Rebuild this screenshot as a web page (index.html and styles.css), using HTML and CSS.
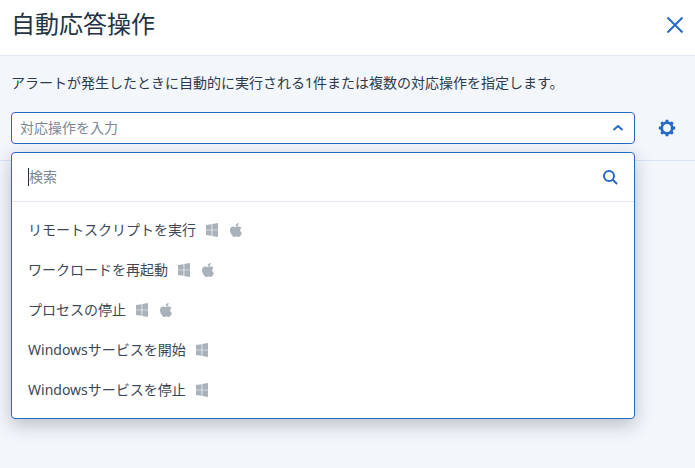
FILE: index.html
```html
<!DOCTYPE html>
<html lang="ja">
<head>
<meta charset="utf-8">
<title>自動応答操作</title>
<link rel="stylesheet" href="styles.css">
</head>
<body>
<svg class="sprites" width="0" height="0">
  <symbol id="win" viewBox="0 0 12 14"><path d="M0 2 5.600 1.200V6.700H0zM6.300 1 12 0v6.700H6.300zM0 7.300h5.600V12.800L0 12zM6.300 7.300H12V14l-5.700-1z"/></symbol>
  <symbol id="apple" viewBox="0 0 14 14"><path d="M9.600 0c.1 1-.3 1.800-.8 2.400-.5.6-1.300 1-2.100.9-.1-.9.3-1.800.8-2.300C8 .4 8.900.1 9.600 0zM12.600 4.700c-.9.600-1.400 1.400-1.400 2.500 0 1.200.7 2.100 1.800 2.600-.3.900-.7 1.700-1.200 2.400-.6.900-1.200 1.700-2.100 1.700-.9 0-1.200-.5-2.300-.5s-1.400.5-2.300.5c-.9 0-1.500-.8-2.100-1.700C1.800 10.700 1 8.900 1 7.300 1 4.900 2.500 3.600 4.100 3.600c.9 0 1.700.6 2.300.6.500 0 1.400-.7 2.500-.7 1.400 0 2.900.6 3.700 1.200z"/></symbol>
</svg>
<header class="header">
  <h1 class="title">自動応答操作</h1>
  <button class="close" aria-label="閉じる">
    <svg width="18" height="18" viewBox="0 0 18 18"><path d="M1.500 1.500 16.500 16.500M16.500 1.500 1.500 16.500"/></svg>
  </button>
</header>
<main class="content">
  <section class="toolbar">
    <p class="desc">アラートが発生したときに自動的に実行される1件または複数の対応操作を指定します。</p>
    <div class="controls">
      <div class="select">
        <span class="placeholder">対応操作を入力</span>
        <svg class="chevron" width="12" height="8" viewBox="0 0 12 8"><path d="M1.500 6 6 2l4.500 4"/></svg>
      </div>
      <button class="gear" aria-label="設定">
        <svg width="18" height="18" viewBox="0 0 18 18"><circle cx="9" cy="9" r="5.300"/><path class="teeth" d="M9 .8v3M9 14.200v3M.8 9h3M14.200 9h3M3.200 3.200l2.100 2.100M12.700 12.700l2.100 2.100M14.800 3.200l-2.100 2.100M5.300 12.700l-2.100 2.100"/></svg>
      </button>
    </div>
  </section>
  <div class="dropdown">
    <div class="search">
      <span class="caret"></span>
      <span class="search-text">検索</span>
      <svg class="search-icon" width="16" height="16" viewBox="0 0 16 16"><circle cx="7" cy="7" r="5"/><path d="M10.800 10.800 15 15"/></svg>
    </div>
    <ul class="list">
      <li class="item"><span class="label">リモートスクリプトを実行</span><svg class="os"><use href="#win"/></svg><svg class="os apple"><use href="#apple"/></svg></li>
      <li class="item"><span class="label">ワークロードを再起動</span><svg class="os"><use href="#win"/></svg><svg class="os apple"><use href="#apple"/></svg></li>
      <li class="item"><span class="label">プロセスの停止</span><svg class="os"><use href="#win"/></svg><svg class="os apple"><use href="#apple"/></svg></li>
      <li class="item"><span class="label">Windowsサービスを開始</span><svg class="os"><use href="#win"/></svg></li>
      <li class="item"><span class="label">Windowsサービスを停止</span><svg class="os"><use href="#win"/></svg></li>
    </ul>
  </div>
</main>
</body>
</html>
```
FILE: styles.css
```css
* { box-sizing: border-box; }
html, body { margin: 0; height: 100%; }
body {
  width: 695px;
  height: 468px;
  overflow: hidden;
  background: #f3f6fb;
  color: #2c3a4b;
  font-family: "Noto Sans", "Noto Sans CJK JP", sans-serif;
  font-size: 14px;
  display: flex;
  flex-direction: column;
}
.sprites { position: absolute; }
.header {
  height: 56px;
  background: #fff;
  border-bottom: 1px solid #dfe6f0;
  display: flex;
  align-items: center;
  justify-content: space-between;
  padding: 0 11px 6px 11px;
  flex: none;
}
.title { margin: 0 0 2px; font-size: 24px; font-weight: 400; line-height: 36px; color: #243444; }
.close, .gear { border: 0; background: none; padding: 0; display: flex; }
.close svg path { stroke: #2668c5; stroke-width: 2; fill: none; }
.content { position: relative; flex: 1; }
.toolbar {
  height: 105px;
  padding: 17px 11px 0;
  border-bottom: 1px solid #d9e4f4;
}
.desc { margin: 0; line-height: 20px; font-size: 14px; color: #2c3a4b; }
.controls { display: flex; align-items: center; margin-top: 19px; }
.select {
  width: 624px;
  height: 32px;
  background: #fff;
  border: 1px solid #2668c5;
  border-radius: 4px;
  display: flex;
  align-items: center;
  justify-content: space-between;
  padding: 0 10px 0 8px;
}
.placeholder { color: #7b8794; margin-bottom: 2px; }
.chevron path { stroke: #2668c5; stroke-width: 2; fill: none; }
.gear { margin-left: 23px; }
.gear circle { fill: none; stroke: #2668c5; stroke-width: 2.800; }
.gear .teeth { stroke: #2668c5; stroke-width: 2.800; fill: none; }
.dropdown {
  position: absolute;
  left: 11px;
  top: 96px;
  width: 624px;
  height: 267px;
  background: #fff;
  border: 1px solid #2668c5;
  border-radius: 4px;
  box-shadow: 0 6px 18px rgba(36, 52, 76, 0.28);
}
.search {
  height: 49px;
  border-bottom: 1px solid #e1e7ef;
  display: flex;
  align-items: center;
  padding: 0 16px;
}
.caret { width: 1px; height: 18px; background: #243444; }
.search-text { color: #7b8794; flex: 1; margin-bottom: 2px; }
.search-icon circle, .search-icon path { fill: none; stroke: #2668c5; stroke-width: 2; }
.list { list-style: none; margin: 0; padding: 8px 0 0; }
.item {
  height: 40px;
  display: flex;
  align-items: center;
  padding-left: 16px;
  color: #3c4858;
}
.label { margin-bottom: 2px; }
.os { width: 12px; height: 14px; margin-left: 10px; fill: #a9b1ba; }
.apple { width: 14px; height: 14px; margin-left: 11px; }
```
